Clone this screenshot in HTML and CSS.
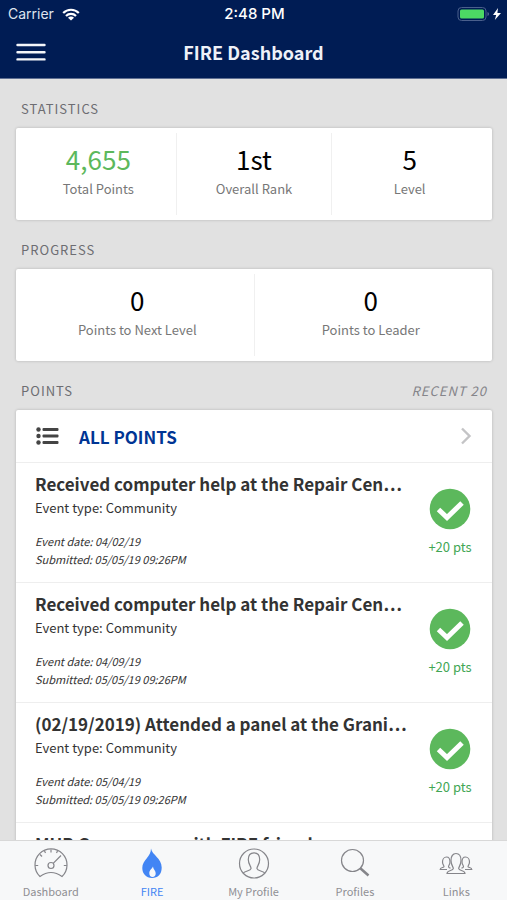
FILE: index.html
```html
<!DOCTYPE html>
<html lang="en">
<head>
<meta charset="utf-8">
<meta name="viewport" content="width=device-width, initial-scale=1">
<title>FIRE Dashboard</title>
<link rel="stylesheet" href="styles.css">
</head>
<body>
<header class="topbar">
  <div class="status">
    <div class="status-left">
      <span>Carrier</span>
      <svg class="wifi" viewBox="0 0 18 13" aria-hidden="true"><path d="M1.200 5A11 11 0 0 1 16.800 5M4 8a7 7 0 0 1 10 0" fill="none" stroke="#fff" stroke-width="2.200"/><path d="M9 12.500L6 9.700a4.200 4.200 0 0 1 6 0z" fill="#fff"/></svg>
    </div>
    <span class="clock">2:48 PM</span>
    <div class="status-right">
      <svg class="battery" viewBox="0 0 44 16" aria-hidden="true"><rect x="1" y="1.500" width="28" height="13" rx="3.500" fill="none" stroke="#4a5f8c"/><rect x="3" y="3.500" width="24" height="9" rx="1.500" fill="#4cd964"/><path d="M30.500 6v4q1.500-.5 1.500-2t-1.500-2z" fill="#5b6d96"/><path d="M41 2L36 9h3.200l-1.400 5L44 7h-3.600z" fill="#fff"/></svg>
    </div>
  </div>
  <div class="navbar">
    <button class="menu" type="button" aria-label="Menu">
      <svg viewBox="0 0 30 18" aria-hidden="true"><path d="M1.500 2h27M1.500 9.200h27M1.500 16.400h27" stroke="#f4f6fa" stroke-width="2.400" stroke-linecap="round"/></svg>
    </button>
    <h1>FIRE Dashboard</h1>
  </div>
</header>

<main class="content">
  <div class="section-head"><h2>STATISTICS</h2></div>
  <section class="card stats">
    <div class="stat"><span class="value good">4,655</span><span class="label">Total Points</span></div>
    <div class="stat"><span class="value">1st</span><span class="label">Overall Rank</span></div>
    <div class="stat"><span class="value">5</span><span class="label">Level</span></div>
  </section>

  <div class="section-head"><h2>PROGRESS</h2></div>
  <section class="card stats">
    <div class="stat"><span class="value">0</span><span class="label">Points to Next Level</span></div>
    <div class="stat"><span class="value">0</span><span class="label">Points to Leader</span></div>
  </section>

  <div class="section-head"><h2>POINTS</h2><em>RECENT 20</em></div>
  <section class="card">
    <a class="all" href="#all">
      <svg class="list-icon" viewBox="0 0 24 18" aria-hidden="true"><g fill="#444"><circle cx="3.500" cy="2.500" r="2.200"/><circle cx="3.500" cy="9" r="2.200"/><circle cx="3.500" cy="15.500" r="2.200"/><rect x="7.500" y="1" width="16" height="3" rx="1"/><rect x="7.500" y="7.500" width="16" height="3" rx="1"/><rect x="7.500" y="14" width="16" height="3" rx="1"/></g></svg>
      <span>ALL POINTS</span>
      <svg class="chevron" viewBox="0 0 12 18" aria-hidden="true"><path d="M2 1.500L9.500 9 2 16.500" fill="none" stroke="#c4c4c6" stroke-width="2.400"/></svg>
    </a>
    <article class="item">
      <div class="info">
        <h3>Received computer help at the Repair Cen…</h3>
        <p class="type">Event type: Community</p>
        <p class="meta">Event date: 04/02/19</p>
        <p class="meta">Submitted: 05/05/19 09:26PM</p>
      </div>
      <div class="award">
        <svg viewBox="0 0 42 42" aria-hidden="true"><circle cx="21" cy="21" r="20.300" fill="#5cb85c"/><path d="M9.500 21.500l8.500 8L33 15" fill="none" stroke="#fff" stroke-width="5"/></svg>
        <span>+20 pts</span>
      </div>
    </article>
    <article class="item">
      <div class="info">
        <h3>Received computer help at the Repair Cen…</h3>
        <p class="type">Event type: Community</p>
        <p class="meta">Event date: 04/09/19</p>
        <p class="meta">Submitted: 05/05/19 09:26PM</p>
      </div>
      <div class="award">
        <svg viewBox="0 0 42 42" aria-hidden="true"><circle cx="21" cy="21" r="20.300" fill="#5cb85c"/><path d="M9.500 21.500l8.500 8L33 15" fill="none" stroke="#fff" stroke-width="5"/></svg>
        <span>+20 pts</span>
      </div>
    </article>
    <article class="item">
      <div class="info">
        <h3>(02/19/2019) Attended a panel at the Grani…</h3>
        <p class="type">Event type: Community</p>
        <p class="meta">Event date: 05/04/19</p>
        <p class="meta">Submitted: 05/05/19 09:26PM</p>
      </div>
      <div class="award">
        <svg viewBox="0 0 42 42" aria-hidden="true"><circle cx="21" cy="21" r="20.300" fill="#5cb85c"/><path d="M9.500 21.500l8.500 8L33 15" fill="none" stroke="#fff" stroke-width="5"/></svg>
        <span>+20 pts</span>
      </div>
    </article>
    <article class="item">
      <div class="info">
        <h3>MUB Game room with FIRE friends</h3>
      </div>
    </article>
  </section>
</main>

<nav class="tabs">
  <a href="#dashboard">
    <svg viewBox="0 0 34 32" aria-hidden="true"><g fill="none" stroke="#85858a" stroke-width="1.200"><path d="M6 28.500A16 16 0 1 1 28 28.500Q17 20.500 6 28.500z"/><circle cx="17" cy="17.500" r="3"/><path d="M19.200 15.300L27 7.500M17 1.500v3M6 6.500l2 2M1.200 17.500h3M29.800 17.500h3M10.500 3l1 2M23.500 3l-1 2"/></g></svg>
    <span>Dashboard</span>
  </a>
  <a class="active" href="#fire">
    <svg viewBox="0 0 34 32" aria-hidden="true"><path d="M16 .5c1 6.500 10.700 9.500 10.700 19 0 6.500-3.700 10.500-9.700 10.500s-9.700-4.500-9.700-10C7.300 12 16 9 16 .5z" fill="#4285f4"/><path d="M18 18.500c-1 2.500-3.700 3.500-3.700 6.700 0 2 1.200 3.800 3.200 3.800s3.200-1.500 3.200-3.500c0-3-2.400-3.800-2.700-7z" fill="#f7f8f9"/></svg>
    <span>FIRE</span>
  </a>
  <a href="#profile">
    <svg viewBox="0 0 34 32" aria-hidden="true"><g fill="none" stroke="#85858a" stroke-width="1.200"><circle cx="17" cy="15.500" r="14.500"/><path d="M6 25.500c1.500-2.500 7.500-2.500 8-4.800.5-2-2.700-4-2.700-9.200 0-4.500 2.200-6.700 5.700-6.700s5.700 2.200 5.700 6.700c0 5.200-3.200 7.200-2.700 9.200.5 2.300 6.500 2.300 8 4.800"/></g></svg>
    <span>My Profile</span>
  </a>
  <a href="#profiles">
    <svg viewBox="0 0 34 32" aria-hidden="true"><circle cx="14.500" cy="12.500" r="11" fill="none" stroke="#85858a" stroke-width="1.200"/><path d="M22 20l8.500 7.500" stroke="#85858a" stroke-width="2.500"/></svg>
    <span>Profiles</span>
  </a>
  <a href="#links">
    <svg viewBox="0 0 34 32" aria-hidden="true"><g fill="none" stroke="#85858a" stroke-width="1.200"><path d="M8 25.500c0-3.500 5.800-2.500 6.300-4.800.4-1.500-2.300-3.200-2.300-8.200 0-4.500 2-7 5-7s5 2.500 5 7c0 5-2.700 6.700-2.300 8.200.5 2.300 6.300 1.300 6.300 4.800z"/><path d="M8 21.500H1.200c0-2.500 3.800-1.500 3.800-3 0-1-1.500-2-1.500-4.500S5 9 7.500 9 11 11.500 11 14s-1.500 3.500-1.500 4.500 1 1.500 2 1.700M26 21.500h6.800c0-2.500-3.800-1.500-3.800-3 0-1 1.500-2 1.500-4.500S29 9 26.500 9 23 11.500 23 14s1.500 3.500 1.500 4.500-1 1.500-2 1.700"/></g></svg>
    <span>Links</span>
  </a>
</nav>
</body>
</html>
```
FILE: styles.css
```css
* { box-sizing: border-box; }

body {
  margin: 0;
  height: 100vh;
  display: flex;
  flex-direction: column;
  background: #e1e1e1;
  color: #333;
  font-family: "Noto Sans CJK KR", "Noto Sans", sans-serif;
}

h1, h2, h3, p { margin: 0; }
a { color: inherit; text-decoration: none; }
svg { display: block; flex: none; }

.topbar {
  flex: none;
  background: #001c54;
  border-bottom: 1px solid #5f6f92;
  color: #fff;
}

.status {
  display: grid;
  grid-template-columns: 1fr auto 1fr;
  align-items: center;
  height: 28px;
  padding: 0 6px 0 8px;
  font: 14px/28px Inter, sans-serif;
}

.status-left { display: flex; align-items: center; gap: 8px; color: #dfe4ee; }
.status-right { display: flex; justify-content: flex-end; }
.clock { font-size: 15px; font-weight: 500; }
.wifi { width: 18px; height: 13px; }
.battery { width: 44px; height: 16px; }

.navbar {
  display: grid;
  grid-template-columns: 1fr auto 1fr;
  align-items: center;
  height: 50px;
  padding: 0 16px 2px;
}

.menu {
  width: 30px;
  padding: 0;
  border: 0;
  background: none;
}

.menu svg { width: 30px; height: 18px; }

h1 { font-size: 18px; font-weight: 700; line-height: 24px; color: #eef1f8; }

.content { flex: 1; min-height: 0; overflow: hidden; padding: 0 15px 0 16px; }

.section-head {
  display: flex;
  justify-content: space-between;
  align-items: center;
  height: 49px;
  padding: 9px 5px 0;
  font-size: 13px;
  color: #6d6d72;
  letter-spacing: 1px;
}

.section-head em { color: #85858a; }

h2 { font-size: 13px; font-weight: 400; }

.card {
  background: #fff;
  border-radius: 2px;
  box-shadow: 0 0 3px rgba(0, 0, 0, 0.22);
}

.stats { display: flex; padding: 5px; }

.stat {
  flex: 1;
  display: flex;
  flex-direction: column;
  align-items: center;
  height: 82px;
  padding-top: 10px;
}

.stat + .stat { border-left: 1px solid #f0f0f0; }
.value { font-size: 26px; line-height: 32px; color: #000; }
.value.good { color: #5cb85c; }
.label { font-size: 13px; line-height: 28px; color: #777; }

.all {
  display: flex;
  align-items: center;
  height: 52px;
  padding: 0 20px 0 19px;
  font-size: 17px;
  font-weight: 700;
  color: #003594;
}

.list-icon { width: 24px; height: 18px; margin-right: 20px; }
.chevron { width: 12px; height: 18px; margin-left: auto; }

.item {
  display: flex;
  height: 120px;
  padding: 8px 20px 0 19px;
  border-top: 1px solid #eee;
}

.info { flex: 1; min-width: 0; white-space: nowrap; }
h3 { font-size: 17px; font-weight: 700; line-height: 26px; }
.type { font-size: 13px; line-height: 22px; margin-bottom: 13px; }
.meta { font-size: 11px; line-height: 18px; font-style: italic; }

.award {
  display: flex;
  flex-direction: column;
  align-items: center;
  width: 44px;
  padding-top: 17px;
  color: #42a655;
  font-size: 13px;
  line-height: 34px;
  white-space: nowrap;
}

.award svg { width: 42px; height: 42px; }

.tabs {
  flex: none;
  display: flex;
  height: 60px;
  padding-top: 7px;
  background: #f7f8f9;
  border-top: 1px solid #d8d8d8;
  color: #8f8f94;
}

.tabs a {
  flex: 1;
  display: flex;
  flex-direction: column;
  align-items: center;
  font-size: 11px;
  line-height: 22px;
}

.tabs svg { width: 34px; height: 32px; }
.tabs .active { color: #4285f4; }
```
